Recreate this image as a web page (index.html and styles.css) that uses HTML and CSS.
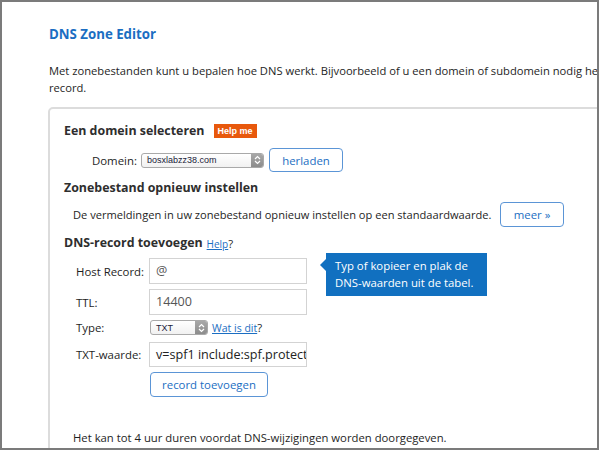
FILE: index.html
```html
<!DOCTYPE html>
<html>
<head>
<meta charset="utf-8">
<link rel="stylesheet" href="styles.css">
</head>
<body>
<div class="frame">
  <h1 class="title">DNS Zone Editor</h1>
  <p class="intro"><span class="line">Met zonebestanden kunt u bepalen hoe DNS werkt. Bijvoorbeeld of u een domein of subdomein nodig hebt voor een</span><br>record.</p>
  <div class="panel">
    <div class="heading-row">
      <h2 class="heading">Een domein selecteren</h2>
      <span class="badge">Help me</span>
    </div>
    <div class="domain-row">
      <span class="label-inline">Domein:</span>
      <div class="select select-domain">
        <span class="select-text">bosxlabzz38.com</span>
        <span class="stepper"><svg width="7" height="10" viewBox="0 0 7 10"><path d="M1 4 L3.5 1.5 L6 4 M1 6 L3.5 8.5 L6 6" fill="none" stroke="#fff" stroke-width="1.2"/></svg></span>
      </div>
      <button class="btn btn-reload">herladen</button>
    </div>
    <h2 class="heading heading-gap">Zonebestand opnieuw instellen</h2>
    <div class="reset-row">
      <span class="desc">De vermeldingen in uw zonebestand opnieuw instellen op een standaardwaarde.</span>
      <button class="btn btn-more">meer »</button>
    </div>
    <div class="heading-row heading-gap">
      <h2 class="heading">DNS-record toevoegen</h2>
      <span class="help"><a class="link">Help</a>?</span>
    </div>
    <div class="form">
      <div class="form-row row-host">
        <span class="label">Host Record:</span>
        <div class="input">@</div>
        <div class="tooltip">Typ of kopieer en plak de<br>DNS-waarden uit de tabel.</div>
      </div>
      <div class="form-row row-ttl">
        <span class="label">TTL:</span>
        <div class="input">14400</div>
      </div>
      <div class="form-row row-type">
        <span class="label">Type:</span>
        <div class="select select-type">
          <span class="select-text">TXT</span>
          <span class="stepper"><svg width="7" height="10" viewBox="0 0 7 10"><path d="M1 4 L3.5 1.5 L6 4 M1 6 L3.5 8.5 L6 6" fill="none" stroke="#fff" stroke-width="1.2"/></svg></span>
        </div>
        <span class="help help-type"><a class="link">Wat is dit</a>?</span>
      </div>
      <div class="form-row row-txt">
        <span class="label">TXT-waarde:</span>
        <div class="input input-txt">v=spf1 include:spf.protection.outlook.com -all</div>
      </div>
      <div class="button-row">
        <button class="btn btn-add">record toevoegen</button>
      </div>
    </div>
    <p class="note">Het kan tot 4 uur duren voordat DNS-wijzigingen worden doorgegeven.</p>
  </div>
</div>
</body>
</html>
```

FILE: styles.css
```css
* { box-sizing: border-box; }
html, body { margin: 0; padding: 0; background: #fff; }
body {
  font-family: "Open Sans", "Noto Sans", sans-serif;
  color: #1e1e1e;
  font-size: 11.3px;
}

.frame {
  width: 599px;
  height: 450px;
  border: 2px solid #7b7b7b;
  overflow: hidden;
  padding: 22px 0 0 47px;
}

.title {
  margin: 0;
  font-size: 13.25px;
  line-height: 20px;
  font-weight: 700;
  color: #1b6ec2;
}

.intro {
  margin: 18px 0 0 0;
  line-height: 17px;
  font-size: 11.2px;
  white-space: nowrap;
}

.panel {
  margin: 11px 0 0 -1px;
  width: 620px;
  height: 400px;
  border: 2px solid #dcdcdc;
  border-radius: 5px;
  padding: 12px 0 0 14px;
}

.heading-row { display: flex; align-items: center; height: 20px; }
.heading {
  margin: 0;
  font-size: 12.4px;
  line-height: 20px;
  font-weight: 700;
  color: #2e2e2e;
}
.heading-gap { margin-top: 6px; }

.badge {
  margin-left: 9px;
  background: #e8580c;
  color: #fff;
  font-family: "Liberation Sans", Arial, sans-serif;
  font-weight: 700;
  font-size: 9px;
  height: 14px;
  line-height: 14px;
  padding: 0 4px;
}

.domain-row {
  display: flex;
  align-items: center;
  margin: 7px 0 0 28px;
  height: 24px;
}
.label-inline { width: 49px; font-size: 11.4px; }

.select {
  display: flex;
  align-items: center;
  height: 15px;
  border: 1px solid #a9a9a9;
  border-radius: 3px;
  background: linear-gradient(#fff, #f1f1f1);
  overflow: hidden;
}
.select-text {
  flex: 1;
  padding-left: 5px;
  font-family: "Liberation Sans", Arial, sans-serif;
  font-size: 9px;
  color: #1a1a3a;
}
.stepper {
  width: 12px;
  height: 100%;
  background: linear-gradient(#a8a8a8, #8c8c8c);
  display: flex;
  align-items: center;
  justify-content: center;
}
.select-domain { width: 123px; }
.select-type { width: 58px; }

.btn {
  font-family: "Open Sans", "Noto Sans", sans-serif;
  font-size: 11.4px;
  color: #1b6ec2;
  background: #fff;
  border: 1px solid #5b95d6;
  border-radius: 4px;
  padding: 0;
  cursor: pointer;
}
.btn-reload { margin-left: 5px; width: 74px; height: 24px; }

.reset-row {
  display: flex;
  align-items: center;
  margin: 4px 0 0 9px;
  height: 25px;
}
.desc { width: 427px; white-space: nowrap; font-size: 11.1px; }
.btn-more { width: 64px; height: 25px; }

.help { margin-left: 4px; font-size: 11.3px; color: #1e1e1e; }
.link {
  color: #1b6ec2;
  text-decoration: underline;
  font-size: 10px;
  cursor: pointer;
}
.help-type { margin-left: 4px; }
.help-type .link { font-size: 10.5px; }

.form { margin: 5px 0 0 12px; }
.form-row {
  display: flex;
  align-items: center;
  position: relative;
}
.label { width: 73px; font-size: 11.4px; }
.input {
  width: 158px;
  height: 26px;
  border: 1px solid #d3d3d3;
  padding: 0 6px;
  line-height: 24px;
  font-size: 12.6px;
  color: #555;
  white-space: nowrap;
  overflow: hidden;
}
.row-ttl { margin-top: 5px; }
.row-type { margin-top: 5px; height: 15px; }
.row-type .select { margin-left: 1px; }
.row-txt { margin-top: 7px; }
.input-txt { height: 25px; color: #222; }

.button-row { margin: 5px 0 0 74px; }
.btn-add { width: 118px; height: 25px; }

.tooltip {
  position: absolute;
  left: 250px;
  top: -5px;
  width: 161px;
  height: 43px;
  background: #1170c0;
  color: #fff;
  font-size: 11.35px;
  line-height: 17px;
  padding: 4px 0 0 9px;
}
.tooltip::before {
  content: "";
  position: absolute;
  left: -6px;
  top: 6px;
  border-style: solid;
  border-width: 6px 6px 6px 0;
  border-color: transparent #1170c0 transparent transparent;
}

.note {
  margin: 32px 0 0 9px;
  line-height: 18px;
  font-size: 11.3px;
}
```
